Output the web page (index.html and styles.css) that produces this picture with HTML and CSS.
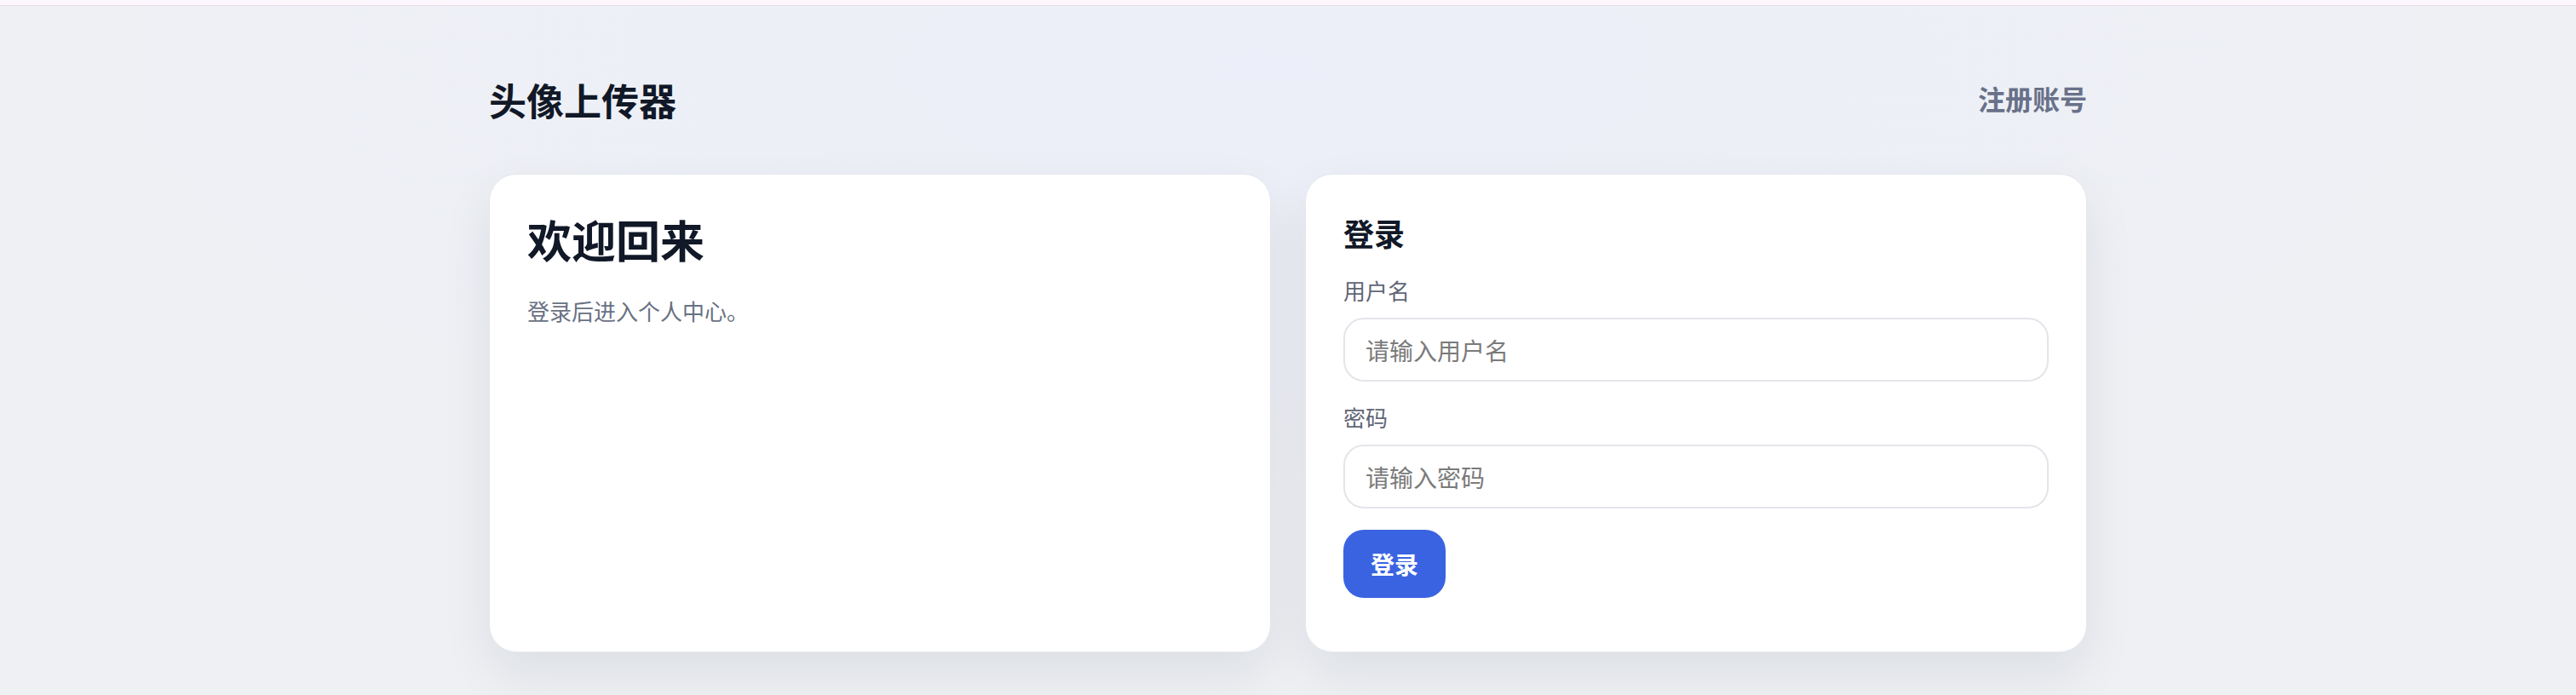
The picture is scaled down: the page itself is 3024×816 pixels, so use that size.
FILE: index.html
```html
<!DOCTYPE html>
<html lang="zh-CN">
<head>
<meta charset="utf-8">
<title>头像上传器</title>
<link rel="stylesheet" href="styles.css">
</head>
<body>
<div class="topbar"></div>
<main class="page">
  <header class="header">
    <h1 class="brand">头像上传器</h1>
    <a class="nav-link" href="#">注册账号</a>
  </header>
  <section class="cards">
    <div class="card card-welcome">
      <h2 class="welcome-title">欢迎回来</h2>
      <p class="welcome-text">登录后进入个人中心。</p>
    </div>
    <div class="card card-login">
      <h3 class="login-title">登录</h3>
      <form class="form">
        <div class="field">
          <label class="label" for="u">用户名</label>
          <input class="input" id="u" type="text" placeholder="请输入用户名">
        </div>
        <div class="field">
          <label class="label" for="p">密码</label>
          <input class="input" id="p" type="password" placeholder="请输入密码">
        </div>
        <button class="btn" type="button">登录</button>
      </form>
    </div>
  </section>
</main>
</body>
</html>
```
FILE: styles.css
```css
* { box-sizing: border-box; }
html, body { margin: 0; padding: 0; }
body {
  min-height: 816px;
  font-family: "Noto Sans CJK SC", "Noto Sans", sans-serif;
  background: radial-gradient(ellipse 1400px 500px at 1500px 80px, #eceff9 0%, rgba(236,239,249,0) 100%), #eef0f4;
  color: #111827;
}
.topbar {
  height: 7px;
  background: #fdf7fd;
  border-bottom: 1px solid #e8dee9;
}
.page {
  width: 1876px;
  margin: 0 auto;
}
.header {
  display: flex;
  justify-content: space-between;
  align-items: center;
  padding-top: 82px;
  height: 138px;
}
.brand {
  margin: 0;
  font-size: 44px;
  line-height: 56px;
  font-weight: 700;
  color: #111827;
}
.nav-link {
  font-size: 32px;
  line-height: 40px;
  font-weight: 700;
  color: #687189;
  text-decoration: none;
  margin-top: -4px;
}
.cards {
  display: grid;
  grid-template-columns: 1fr 1fr;
  gap: 40px;
  margin-top: 59px;
}
.card {
  background: #ffffff;
  border: 1px solid #e5e7ec;
  border-radius: 32px;
  padding: 44px 44px 63px;
  box-shadow: 0 24px 60px rgba(17, 24, 39, 0.08);
}
.welcome-title {
  margin: 0 0 32px;
  font-size: 52px;
  line-height: 64px;
  font-weight: 700;
  color: #111827;
}
.welcome-text {
  margin: 0;
  font-size: 26px;
  line-height: 40px;
  color: #687183;
}
.login-title {
  margin: 0 0 26px;
  font-size: 36px;
  line-height: 48px;
  font-weight: 700;
  color: #111827;
}
.form {
  display: flex;
  flex-direction: column;
  align-items: flex-start;
}
.field {
  width: 100%;
  margin-bottom: 24px;
}
.field + .btn { margin-top: 1px; }
.label {
  display: block;
  font-size: 26px;
  line-height: 36px;
  color: #5f6676;
  margin-bottom: 14px;
}
.input {
  display: block;
  width: 100%;
  height: 75px;
  border: 2px solid #e3e5ea;
  border-radius: 24px;
  padding: 0 24px;
  font-family: inherit;
  font-size: 28px;
  color: #111827;
  background: #ffffff;
  outline: none;
}
.input::placeholder { color: #7a7a7a; }
.btn {
  height: 80px;
  padding: 0 32px;
  border: none;
  border-radius: 24px;
  background: #3a63e1;
  color: #ffffff;
  font-family: inherit;
  font-size: 28px;
  font-weight: 700;
  cursor: pointer;
}
```
